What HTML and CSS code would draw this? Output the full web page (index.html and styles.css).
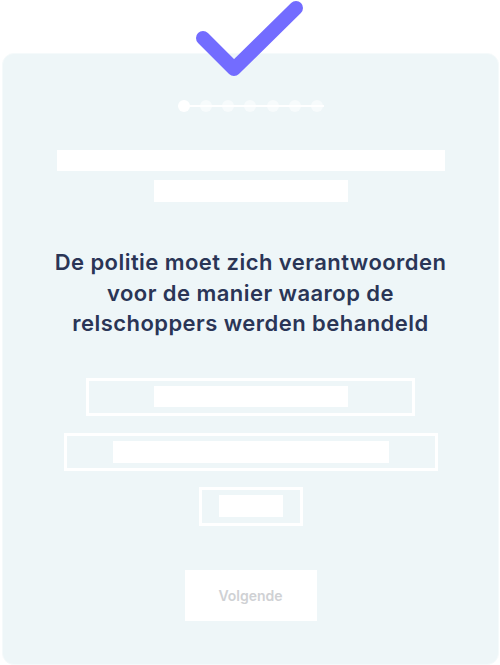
FILE: index.html
```html
<!DOCTYPE html>
<html lang="nl">
<head>
<meta charset="utf-8">
<title>Stelling</title>
<link rel="stylesheet" href="styles.css">
</head>
<body>
<div class="page">
  <svg class="check" width="120" height="80" viewBox="0 0 120 80" aria-hidden="true">
    <path d="M13 38 L44 69 L106 8" fill="none" stroke="#736CFF" stroke-width="14" stroke-linecap="round" stroke-linejoin="round"/>
  </svg>
  <div class="card">
    <div class="steps">
      <span class="dot active"></span>
      <span class="dot"></span>
      <span class="dot"></span>
      <span class="dot"></span>
      <span class="dot"></span>
      <span class="dot"></span>
      <span class="dot"></span>
    </div>
    <div class="bar bar-wide"></div>
    <div class="bar bar-mid"></div>
    <h1 class="statement">De politie moet zich verantwoorden voor de manier waarop de relschoppers werden behandeld</h1>
    <div class="option opt-1"><span class="bar bar-in1"></span></div>
    <div class="option opt-2"><span class="bar bar-in2"></span></div>
    <div class="option opt-3"><span class="bar bar-in3"></span></div>
    <button class="next" type="button">Volgende</button>
  </div>
</div>
</body>
</html>
```
FILE: styles.css
```css
html, body {
  margin: 0;
  padding: 0;
  background: #ffffff;
}
body {
  font-family: Inter, "Open Sans", sans-serif;
  width: 500px;
  height: 665px;
  overflow: hidden;
}
.page {
  position: relative;
  padding-top: 53px;
}
.check {
  position: absolute;
  left: 190px;
  top: 0;
  z-index: 2;
}
.card {
  margin: 0 1px 0 2px;
  height: 612px;
  box-sizing: border-box;
  border: 1px solid #f5fafb;
  border-radius: 12px;
  background: #eef6f8;
  display: flex;
  flex-direction: column;
  align-items: center;
}
.steps {
  margin-top: 46px;
  width: 146px;
  height: 12px;
  display: flex;
  justify-content: space-between;
  background: linear-gradient(#fff, #fff) center / 100% 2px no-repeat;
}
.dot {
  width: 12px;
  height: 12px;
  border-radius: 50%;
  background: rgba(255, 255, 255, 0.55);
}
.dot.active {
  background: #ffffff;
}
.bar {
  display: block;
  background: #ffffff;
}
.bar-wide {
  margin-top: 38px;
  width: 388px;
  height: 21px;
}
.bar-mid {
  margin-top: 9px;
  width: 194px;
  height: 22px;
}
.statement {
  margin: 45px 0 0;
  width: 400px;
  text-align: center;
  font-size: 22px;
  line-height: 30.5px;
  font-weight: 600;
  color: #2a3556;
  letter-spacing: 0.45px;
}
.option {
  box-sizing: border-box;
  border: 3px solid #ffffff;
  display: flex;
  align-items: center;
  justify-content: center;
}
.opt-1 {
  margin-top: 39px;
  width: 329px;
  height: 38px;
}
.opt-2 {
  margin-top: 17px;
  width: 374px;
  height: 38px;
}
.opt-3 {
  margin-top: 16px;
  width: 104px;
  height: 39px;
}
.bar-in1 { width: 194px; height: 21px; }
.bar-in2 { width: 276px; height: 22px; }
.bar-in3 { width: 64px; height: 22px; }
.next {
  margin-top: 44px;
  width: 132px;
  height: 51px;
  border: none;
  background: #ffffff;
  color: #cfd1d4;
  font-family: Inter, "Open Sans", sans-serif;
  font-size: 14px;
  font-weight: 600;
  padding: 0;
}
```
